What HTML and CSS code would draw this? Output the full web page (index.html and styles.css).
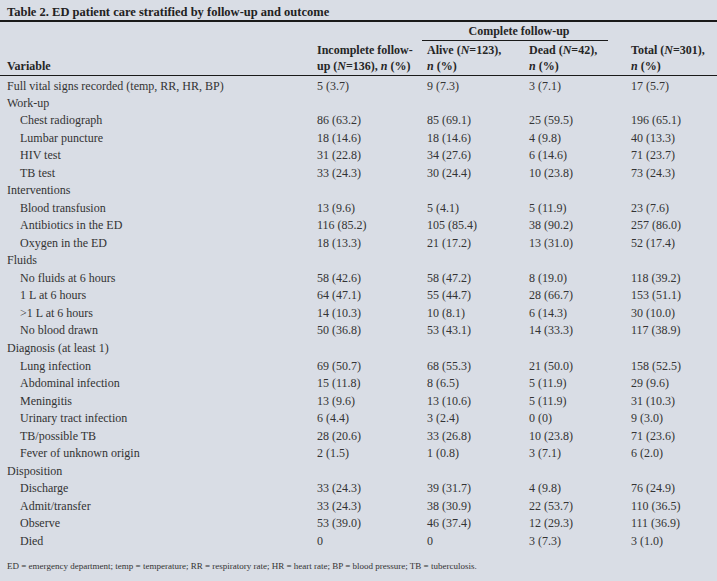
FILE: index.html
```html
<!DOCTYPE html>
<html lang="en">
<head>
<meta charset="utf-8">
<title>Table 2</title>
<link rel="stylesheet" href="styles.css">
</head>
<body>
<div class="page">
  <div class="title">Table 2. ED patient care stratified by follow-up and outcome</div>
  <table class="data">
    <colgroup>
      <col class="c-var">
      <col class="c-inc">
      <col class="c-alive">
      <col class="c-dead">
      <col class="c-total">
    </colgroup>
    <thead>
      <tr class="h1">
        <th></th>
        <th></th>
        <th colspan="2" class="span-head"><span class="span-label">Complete follow-up</span></th>
        <th></th>
      </tr>
      <tr class="h2">
        <th></th>
        <th>Incomplete follow-</th>
        <th>Alive (<i>N</i>=123),</th>
        <th>Dead (<i>N</i>=42),</th>
        <th>Total (<i>N</i>=301),</th>
      </tr>
      <tr class="h3">
        <th>Variable</th>
        <th>up (<i>N</i>=136), <i>n</i> (%)</th>
        <th><i>n</i> (%)</th>
        <th><i>n</i> (%)</th>
        <th><i>n</i> (%)</th>
      </tr>
    </thead>
    <tbody>
      <tr><td>Full vital signs recorded (temp, RR, HR, BP)</td><td>5 (3.7)</td><td>9 (7.3)</td><td>3 (7.1)</td><td>17 (5.7)</td></tr>
      <tr><td>Work-up</td><td></td><td></td><td></td><td></td></tr>
      <tr class="sub"><td>Chest radiograph</td><td>86 (63.2)</td><td>85 (69.1)</td><td>25 (59.5)</td><td>196 (65.1)</td></tr>
      <tr class="sub"><td>Lumbar puncture</td><td>18 (14.6)</td><td>18 (14.6)</td><td>4 (9.8)</td><td>40 (13.3)</td></tr>
      <tr class="sub"><td>HIV test</td><td>31 (22.8)</td><td>34 (27.6)</td><td>6 (14.6)</td><td>71 (23.7)</td></tr>
      <tr class="sub"><td>TB test</td><td>33 (24.3)</td><td>30 (24.4)</td><td>10 (23.8)</td><td>73 (24.3)</td></tr>
      <tr><td>Interventions</td><td></td><td></td><td></td><td></td></tr>
      <tr class="sub"><td>Blood transfusion</td><td>13 (9.6)</td><td>5 (4.1)</td><td>5 (11.9)</td><td>23 (7.6)</td></tr>
      <tr class="sub"><td>Antibiotics in the ED</td><td>116 (85.2)</td><td>105 (85.4)</td><td>38 (90.2)</td><td>257 (86.0)</td></tr>
      <tr class="sub"><td>Oxygen in the ED</td><td>18 (13.3)</td><td>21 (17.2)</td><td>13 (31.0)</td><td>52 (17.4)</td></tr>
      <tr><td>Fluids</td><td></td><td></td><td></td><td></td></tr>
      <tr class="sub"><td>No fluids at 6 hours</td><td>58 (42.6)</td><td>58 (47.2)</td><td>8 (19.0)</td><td>118 (39.2)</td></tr>
      <tr class="sub"><td>1 L at 6 hours</td><td>64 (47.1)</td><td>55 (44.7)</td><td>28 (66.7)</td><td>153 (51.1)</td></tr>
      <tr class="sub"><td>&gt;1 L at 6 hours</td><td>14 (10.3)</td><td>10 (8.1)</td><td>6 (14.3)</td><td>30 (10.0)</td></tr>
      <tr class="sub"><td>No blood drawn</td><td>50 (36.8)</td><td>53 (43.1)</td><td>14 (33.3)</td><td>117 (38.9)</td></tr>
      <tr><td>Diagnosis (at least 1)</td><td></td><td></td><td></td><td></td></tr>
      <tr class="sub"><td>Lung infection</td><td>69 (50.7)</td><td>68 (55.3)</td><td>21 (50.0)</td><td>158 (52.5)</td></tr>
      <tr class="sub"><td>Abdominal infection</td><td>15 (11.8)</td><td>8 (6.5)</td><td>5 (11.9)</td><td>29 (9.6)</td></tr>
      <tr class="sub"><td>Meningitis</td><td>13 (9.6)</td><td>13 (10.6)</td><td>5 (11.9)</td><td>31 (10.3)</td></tr>
      <tr class="sub"><td>Urinary tract infection</td><td>6 (4.4)</td><td>3 (2.4)</td><td>0 (0)</td><td>9 (3.0)</td></tr>
      <tr class="sub"><td>TB/possible TB</td><td>28 (20.6)</td><td>33 (26.8)</td><td>10 (23.8)</td><td>71 (23.6)</td></tr>
      <tr class="sub"><td>Fever of unknown origin</td><td>2 (1.5)</td><td>1 (0.8)</td><td>3 (7.1)</td><td>6 (2.0)</td></tr>
      <tr><td>Disposition</td><td></td><td></td><td></td><td></td></tr>
      <tr class="sub"><td>Discharge</td><td>33 (24.3)</td><td>39 (31.7)</td><td>4 (9.8)</td><td>76 (24.9)</td></tr>
      <tr class="sub"><td>Admit/transfer</td><td>33 (24.3)</td><td>38 (30.9)</td><td>22 (53.7)</td><td>110 (36.5)</td></tr>
      <tr class="sub"><td>Observe</td><td>53 (39.0)</td><td>46 (37.4)</td><td>12 (29.3)</td><td>111 (36.9)</td></tr>
      <tr class="sub"><td>Died</td><td>0</td><td>0</td><td>3 (7.3)</td><td>3 (1.0)</td></tr>
    </tbody>
  </table>
  <p class="note">ED = emergency department; temp = temperature; RR = respiratory rate; HR = heart rate; BP = blood pressure; TB = tuberculosis.</p>
</div>
</body>
</html>
```
FILE: styles.css
```css
html, body {
  margin: 0;
  padding: 0;
  background: #d9dde5;
}

.page {
  width: 717px;
  height: 581px;
  background: #d9dde5;
  font-family: "Liberation Serif", "Times New Roman", serif;
  color: #333333;
}

.title {
  font-weight: bold;
  font-size: 12.5px;
  line-height: 16px;
  padding: 4px 0 0 7px;
  height: 16px;
  border-bottom: 2px solid #1a1a1a;
  color: #222222;
}

.data {
  width: 717px;
  border-collapse: collapse;
  table-layout: fixed;
  font-size: 12px;
}

.c-var { width: 312px; }
.c-inc { width: 110px; }
.c-alive { width: 102px; }
.c-dead { width: 102px; }
.c-total { width: 91px; }

.data th,
.data td {
  padding: 0 0 0 5px;
  text-align: left;
  white-space: nowrap;
  vertical-align: middle;
}

.data th:first-child,
.data td:first-child {
  padding-left: 7px;
}

.data thead th {
  font-weight: bold;
  color: #262626;
}

.data thead tr.h1 { height: 18px; }
.data thead tr.h2 { height: 17px; }
.data thead tr.h3 { height: 17px; }
.data thead tr.h2 th,
.data thead tr.h3 th { padding-top: 1px; }
.data thead tr.h3 th { border-bottom: 1px solid #1a1a1a; }

.span-head {
  padding: 0 !important;
  vertical-align: bottom !important;
}

.span-label {
  display: block;
  margin-right: 18px;
  text-align: center;
  line-height: 17px;
  padding-top: 1px;
  border-bottom: 1px solid #1a1a1a;
  padding-left: 8px;
}

.data tbody tr { height: 17.54px; }

.data tbody td {
  vertical-align: top;
  padding-top: 4px;
  line-height: 12px;
}

.data tbody tr.sub td:first-child {
  padding-left: 20px;
}

.note {
  margin: 12px 0 0 7px;
  font-size: 9px;
  line-height: 12px;
  color: #333333;
}
```
